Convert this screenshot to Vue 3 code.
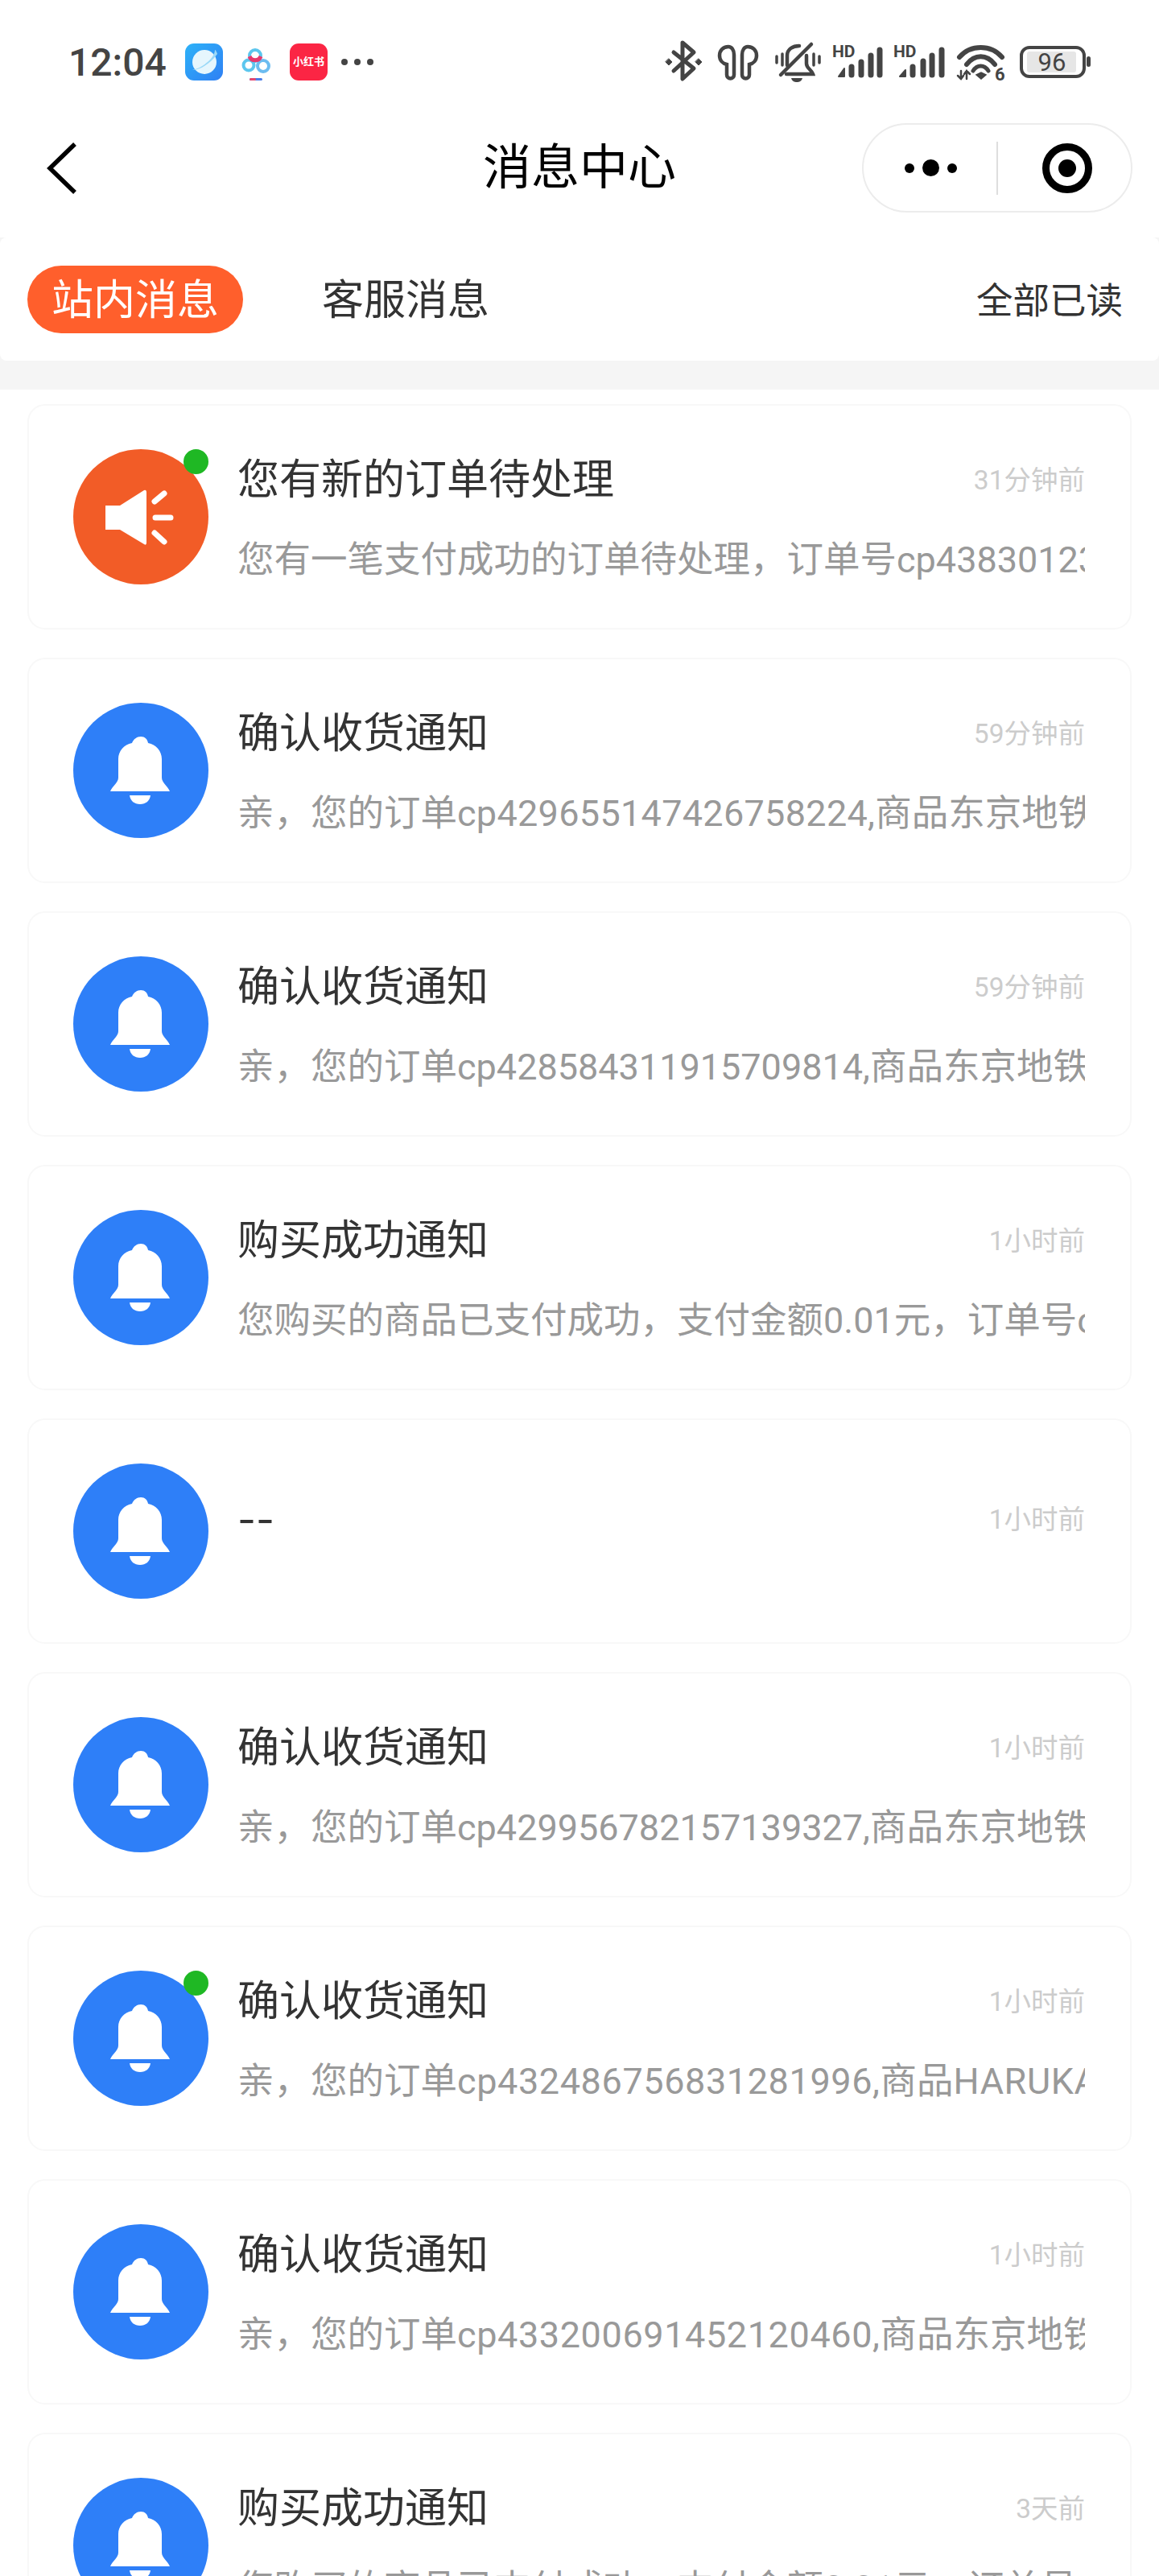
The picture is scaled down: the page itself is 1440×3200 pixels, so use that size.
<script setup>
const raw = [
  { id: 1, kind: 'notice', unread: true, title: '您有新的订单待处理', time: '31分钟前', desc: '您有一笔支付成功的订单待处理，订单号cp438301234567890123', track: 0 },
  { id: 2, kind: 'bell', title: '确认收货通知', time: '59分钟前', desc: '亲，您的订单cp429655147426758224,商品东京地铁线路周边', track: 0.3 },
  { id: 3, kind: 'bell', title: '确认收货通知', time: '59分钟前', desc: '亲，您的订单cp428584311915709814,商品东京地铁线路周边', track: 0 },
  { id: 4, kind: 'bell', title: '购买成功通知', time: '1小时前', desc: '您购买的商品已支付成功，支付金额0.01元，订单号cp4290000000', track: 0 },
  { id: 5, kind: 'bell', title: '--', time: '1小时前', desc: '', track: 0 },
  { id: 6, kind: 'bell', title: '确认收货通知', time: '1小时前', desc: '亲，您的订单cp429956782157139327,商品东京地铁线路周边', track: 0 },
  { id: 7, kind: 'bell', unread: true, title: '确认收货通知', time: '1小时前', desc: '亲，您的订单cp432486756831281996,商品HARUKA特急周边商品', track: 0.6 },
  { id: 8, kind: 'bell', title: '确认收货通知', time: '1小时前', desc: '亲，您的订单cp433200691452120460,商品东京地铁线路周边', track: 0.6 },
  { id: 9, kind: 'bell', title: '购买成功通知', time: '3天前', desc: '您购买的商品已支付成功，支付金额0.01元，订单号cp4330000000', track: 0 }
]

const messages = raw.map((m) => ({
  ...m,
  parts: m.desc
    .split(/([\x21-\x7e]+)/)
    .filter(Boolean)
    .map((text) => ({ text, latin: /^[\x21-\x7e]/.test(text) }))
}))
</script>

<template>
  <div class="page">
    <header class="status">
      <span class="clock">12:04</span>
      <svg class="app planet" width="47" height="46" viewBox="0 0 47 46">
        <defs>
          <linearGradient id="planetBg" x1="0" y1="0" x2="1" y2="1">
            <stop offset="0" stop-color="#2db2f8" />
            <stop offset="1" stop-color="#2f80f4" />
          </linearGradient>
        </defs>
        <rect width="47" height="46" rx="11" fill="url(#planetBg)" />
        <circle cx="24" cy="23" r="15" fill="#e6f6fd" />
        <path d="M9 33C16 33 29 28 40 13C39 10 38 8 37 8C37 18 22 30 9 33Z" fill="#9bd9f7" />
      </svg>
      <svg class="app baidu" width="37" height="46" viewBox="0 0 37 46" fill="none">
        <circle cx="9" cy="27" r="6.5" stroke="#5cc6ee" stroke-width="4" />
        <circle cx="27" cy="28" r="7" stroke="#6cbcf0" stroke-width="4" />
        <circle cx="17" cy="15" r="7" stroke="#5cc6ee" stroke-width="4" />
        <path d="M10 16A7.5 7.5 0 0 0 24 16" stroke="#e53a6e" stroke-width="5" />
        <rect x="10" y="43" width="16" height="3" rx="1.5" fill="#4a7de8" />
        <rect x="10" y="43" width="8" height="3" rx="1.5" fill="#e5486e" />
      </svg>
      <span class="app redbook">小红书</span>
      <span class="more"><i></i><i></i><i></i></span>

      <div class="sys">
        <svg width="52" height="60" viewBox="0 0 52 60" fill="none" stroke="#444" stroke-width="5" stroke-linejoin="round" stroke-linecap="round">
          <path d="M10 18L35 38L21 51V6L35 18L10 41" />
          <path d="M4 26L8 30L4 34L0 30Z M41 26L45 30L41 34L37 30Z" fill="#444" stroke-width="1" />
        </svg>
        <svg width="60" height="60" viewBox="0 0 60 60" fill="none" stroke="#444" stroke-width="4.5">
          <path d="M14 11C7 11 3 16 3 22c0 6 4 10 9 11v13a4.5 4.5 0 0 0 9 0V21c0-6-3-10-7-10z" />
          <path transform="translate(52 0) scale(-1 1)" d="M14 11C7 11 3 16 3 22c0 6 4 10 9 11v13a4.5 4.5 0 0 0 9 0V21c0-6-3-10-7-10z" />
        </svg>
        <svg width="59" height="60" viewBox="0 0 59 60" fill="none" stroke="#444" stroke-width="4.5" stroke-linecap="round">
          <path d="M15 34V22C15 14 22 10 30 10" />
          <path d="M39 22V32C39 38 45 39 47 45H14" />
          <path d="M7 46L45 8" />
          <path d="M2 23V31M9 20V34M48 20V34M55 23V31" stroke-width="3.5" />
          <path d="M20 50H34C33 54 30 55 27 55C24 55 21 54 20 50Z" fill="#444" stroke="none" />
        </svg>
        <svg width="64" height="60" viewBox="0 0 64 60">
          <text class="hd" x="0" y="24">HD</text>
          <path d="M8 48L15 38V48Z" fill="#444" stroke="#444" stroke-width="2" stroke-linejoin="round" />
          <path d="M24 36V46M36 30V46M48 22V46M59 15V46" stroke="#444" stroke-width="7" stroke-linecap="round" />
        </svg>
        <svg width="67" height="60" viewBox="0 0 67 60">
          <text class="hd" x="0" y="24">HD</text>
          <path d="M8 48L15 40V48Z" fill="#444" stroke="#444" stroke-width="2" stroke-linejoin="round" />
          <path d="M24 36V46M37 29V46M48 22V46M60 15V46" stroke="#444" stroke-width="7" stroke-linecap="round" />
        </svg>
        <svg width="66" height="60" viewBox="0 0 66 60" fill="none" stroke="#444" stroke-width="6" stroke-linecap="round">
          <path d="M3 24C17 8 42 8 56 24" />
          <path d="M12 33C22 20 37 20 47 33" />
          <path d="M20 41C25 33 34 33 39 41" stroke-width="5" />
          <path d="M24 46L30 43L36 46L30 51Z" fill="#444" stroke="#444" stroke-width="1.5" />
          <path d="M5 41V51M1 47L5 51L8 47M12 51V41M9 45L12 41L16 45" stroke-width="2.5" />
          <text class="six" x="47" y="53">6</text>
        </svg>
        <svg width="88" height="60" viewBox="0 0 88 60">
          <rect x="2" y="12" width="78" height="36" rx="10" fill="none" stroke="#444" stroke-width="4" />
          <rect x="9" y="17" width="61" height="26" rx="3" fill="#e6e6e6" />
          <text class="level" x="40" y="41" text-anchor="middle">96</text>
          <rect x="83" y="23" width="5" height="13" rx="2.5" fill="#444" />
        </svg>
      </div>
    </header>

    <nav class="nav">
      <svg class="back" width="40" height="64" viewBox="0 0 40 64" fill="none" stroke="#000" stroke-width="5.5" stroke-linejoin="miter">
        <path d="M35 2L4 32L35 62" />
      </svg>
      <h1 class="heading">消息中心</h1>
      <div class="capsule">
        <div class="cell"><span class="three"><i></i><b></b><i></i></span></div>
        <span class="divider"></span>
        <div class="cell"><span class="target"><i></i></span></div>
      </div>
    </nav>

    <div class="band">
      <div class="tabs">
        <span class="tab active">站内消息</span>
        <span class="tab">客服消息</span>
        <span class="read">全部已读</span>
      </div>
    </div>

    <main class="list">
      <article v-for="m in messages" :key="m.id" class="card">
        <div class="avatar" :class="m.kind">
          <svg v-if="m.kind === 'notice'" width="168" height="168" viewBox="0 0 168 168" fill="none">
            <path d="M40 70H58L88 51Q91 50 91 54V116Q91 120 88 118L58 100H40Z" fill="#fff" />
            <path d="M101 65L113 55M102 85H121M101 104L113 115" stroke="#fff" stroke-width="7" stroke-linecap="round" />
          </svg>
          <svg v-else width="168" height="168" viewBox="0 0 168 168" fill="#fff">
            <path d="M84 42C89 42 92 45 93 50C103 52 110 60 110 70V93C110 99 117 103 120 110H46C49 103 56 99 56 93V70C56 60 63 52 73 50C75 45 79 42 84 42Z" />
            <path d="M70 115H96C95 122 90 126 83 126C76 126 71 122 70 115Z" />
          </svg>
          <span v-if="m.unread" class="dot"></span>
        </div>
        <div class="body">
          <div class="head" :class="{ lone: !m.desc }">
            <span class="title">{{ m.title }}</span>
            <span class="time">{{ m.time }}</span>
          </div>
          <p v-if="m.desc" class="desc">
            <template v-for="(part, i) in m.parts" :key="i">
              <span v-if="part.latin" class="latin" :style="{ letterSpacing: m.track + 'px' }">{{ part.text }}</span>
              <template v-else>{{ part.text }}</template>
            </template>
          </p>
        </div>
      </article>
    </main>
  </div>
</template>

<style scoped>
.page {
  width: 1440px;
  height: 3200px;
  overflow: hidden;
  background: #fff;
  font-family: Roboto, "Noto Sans CJK SC", sans-serif;
  color: #333;
}

.status {
  height: 153px;
  display: flex;
  align-items: center;
  padding: 0 85px;
  box-sizing: border-box;
}
.clock {
  width: 120px;
  font-size: 48px;
  font-weight: 500;
  color: #444;
  line-height: 1;
  margin: 2px 25px 0 0;
}
.app { flex: none; }
.baidu { margin-left: 23px; }
.redbook {
  width: 47px;
  height: 46px;
  margin-left: 23px;
  border-radius: 11px;
  background: #fb2544;
  color: #fff;
  font-size: 13px;
  font-weight: 700;
  line-height: 46px;
  text-align: center;
  white-space: nowrap;
}
.more {
  display: flex;
  gap: 8px;
  margin-left: 17px;
}
.more i {
  width: 8px;
  height: 8px;
  border-radius: 50%;
  background: #444;
}
.sys {
  margin-left: auto;
  display: flex;
  align-items: center;
  gap: 12px;
}
.sys svg { overflow: visible; flex: none; }
.hd { font: 700 21px Roboto, sans-serif; fill: #444; }
.six { font: 700 22px Roboto, sans-serif; fill: #444; stroke: none; }
.level { font: 400 31px Roboto, sans-serif; fill: #444; }

.nav {
  height: 111px;
  display: grid;
  grid-template-columns: 1fr auto 1fr;
  align-items: center;
  padding: 0 33px;
  margin-bottom: 31px;
}
.back {
  margin-left: 25px;
  justify-self: start;
}
.heading {
  margin: 0;
  font-size: 60px;
  font-weight: 400;
  line-height: 74px;
  color: #000;
}
.capsule {
  justify-self: end;
  width: 336px;
  height: 111px;
  box-sizing: border-box;
  display: flex;
  align-items: center;
  border: 2px solid #ececec;
  border-radius: 56px;
}
.cell {
  flex: 1;
  display: flex;
  justify-content: center;
  align-items: center;
}
.divider {
  width: 2px;
  height: 66px;
  background: #dedede;
}
.three {
  display: flex;
  align-items: center;
  gap: 10px;
  margin-left: 2px;
}
.three i {
  width: 12px;
  height: 12px;
  border-radius: 50%;
  background: #000;
}
.three b {
  width: 21px;
  height: 21px;
  border-radius: 50%;
  background: #000;
}
.target {
  width: 62px;
  height: 62px;
  margin-left: 6px;
  box-sizing: border-box;
  border: 9px solid #000;
  border-radius: 50%;
  display: flex;
  align-items: center;
  justify-content: center;
}
.target i {
  width: 22px;
  height: 22px;
  border-radius: 50%;
  background: #000;
}

.band {
  background: #f5f5f5;
  padding-bottom: 36px;
}
.tabs {
  height: 153px;
  box-sizing: border-box;
  display: flex;
  align-items: center;
  padding: 0 45px 0 34px;
  background: #fff;
  border-radius: 8px;
}
.tab {
  height: 84px;
  line-height: 88px;
  padding: 0 30px;
  font-size: 52px;
  border-radius: 42px;
  color: #333;
}
.tab + .tab { margin-left: 68px; }
.tab.active {
  background: #ff5f2c;
  color: #fff;
}
.read {
  margin-left: auto;
  padding-bottom: 4px;
  font-size: 45.5px;
  color: #333;
}

.list {
  display: flex;
  flex-direction: column;
  gap: 35px;
  padding: 18px 34px 0;
}
.card {
  flex: none;
  height: 280px;
  box-sizing: border-box;
  display: flex;
  gap: 36px;
  padding: 54px 56px 0 55px;
  border: 2px solid #f8f8f8;
  border-radius: 22px;
  background: #fff;
}
.avatar {
  position: relative;
  flex: none;
  width: 168px;
  height: 168px;
  border-radius: 50%;
}
.avatar svg { display: block; }
.avatar.notice { background: #f25c27; }
.avatar.bell { background: #2e7ff8; }
.dot {
  position: absolute;
  top: 0;
  right: 0;
  width: 31px;
  height: 31px;
  border-radius: 50%;
  background: #1fb824;
}
.body {
  flex: 1;
  min-width: 0;
}
.head {
  display: flex;
  align-items: center;
  justify-content: space-between;
  height: 70px;
  margin-top: 4px;
}
.head.lone { margin-top: 35px; }
.head.lone .title {
  font-family: Inter, sans-serif;
  font-size: 50px;
}
.title {
  font-size: 52px;
  line-height: 70px;
  color: #333;
}
.time {
  font-size: 33.5px;
  line-height: 40px;
  color: #ccc;
}
.desc {
  margin: 34px 0 0;
  font-size: 45.5px;
  line-height: 60px;
  color: #999;
  white-space: nowrap;
  overflow: hidden;
}
.latin { font-size: 45px; }
</style>
